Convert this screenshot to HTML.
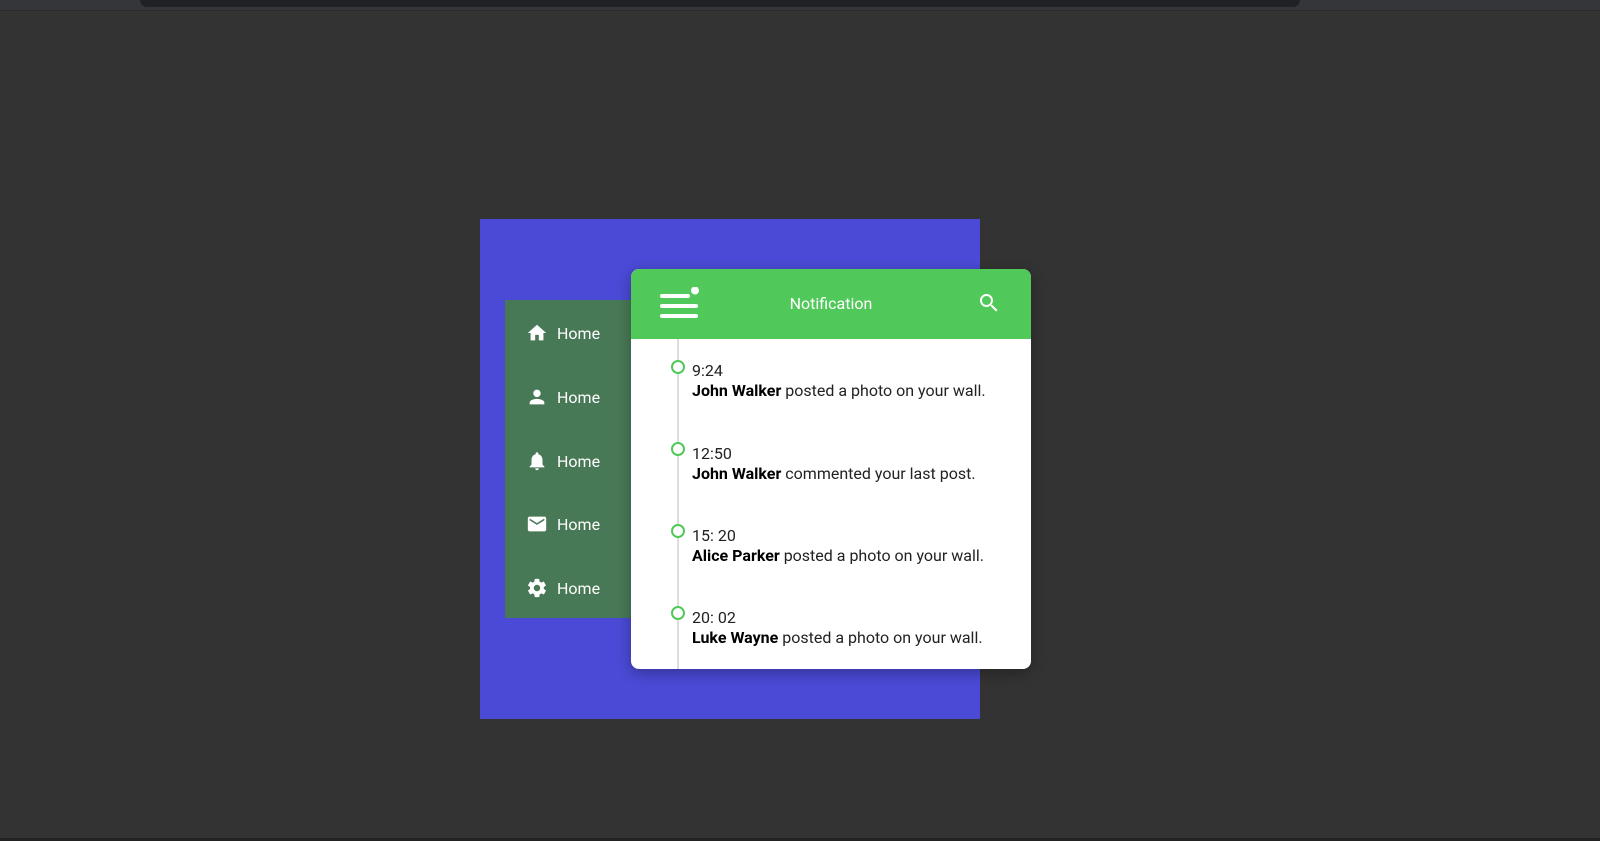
<!DOCTYPE html>
<html><head><style>
*{margin:0;padding:0;box-sizing:border-box}
body{width:1600px;height:841px;background:#333333;position:relative;overflow:hidden;font-family:Roboto,"Liberation Sans",sans-serif}
.top{position:absolute;left:0;top:0;width:1600px;height:11px;background:#35363a;border-bottom:1px solid #2a2a2a}
.url{position:absolute;left:140px;top:0;width:1160px;height:7px;background:#202124;border-radius:0 0 8px 8px}
.bot{position:absolute;left:0;top:838px;width:1600px;height:3px;background:#222}
.blue{position:absolute;left:480px;top:219px;width:500px;height:500px;background:#4a4ad6}
.side{position:absolute;left:505px;top:300px;width:150px;height:318px;background:#487956}
.it{position:absolute;left:21px;height:24px;color:#fff;font-size:16px;display:flex;align-items:center}
.it svg{width:22px;height:22px;fill:#fff;margin-right:9px}
.card{position:absolute;left:631px;top:269px;width:400px;height:400px;background:#fff;border-radius:8px;overflow:hidden;box-shadow:0 4px 14px rgba(0,0,0,.3)}
.hd{height:70px;background:#51c95a;position:relative;color:#fff}
.hd .t{position:absolute;left:0;right:0;text-align:center;top:25px;font-size:16px}
.line{position:absolute;left:46px;top:70px;width:2px;height:330px;background:#ddd}
.n{position:absolute;left:61px;font-size:16px;color:#222;line-height:20px}
.n b{color:#000}
.c{position:absolute;left:40px;width:14px;height:14px;border:2px solid #51c95a;border-radius:50%;background:#fff}
</style></head><body>
<div class="top"><div class="url"></div></div>
<div class="bot"></div>
<div class="blue"></div>
<div class="side">
<div class="it" style="top:21px"><svg viewBox="0 0 24 24"><path d="M10 20v-6h4v6h5v-8h3L12 3 2 12h3v8z"/></svg>Home</div>
<div class="it" style="top:85px"><svg viewBox="0 0 24 24"><path d="M12 12c2.2 0 4-1.8 4-4s-1.8-4-4-4-4 1.8-4 4 1.8 4 4 4zm0 2c-2.7 0-8 1.3-8 4v2h16v-2c0-2.7-5.3-4-8-4z"/></svg>Home</div>
<div class="it" style="top:149px"><svg viewBox="0 0 24 24"><path d="M12 22c1.1 0 2-.9 2-2h-4c0 1.1.9 2 2 2zm6-6v-5c0-3.1-1.6-5.6-4.5-6.3V4c0-.8-.7-1.5-1.5-1.5s-1.5.7-1.5 1.5v.7C7.6 5.4 6 7.9 6 11v5l-2 2v1h16v-1z"/></svg>Home</div>
<div class="it" style="top:212px"><svg viewBox="0 0 24 24"><path d="M20 4H4c-1.1 0-2 .9-2 2v12c0 1.1.9 2 2 2h16c1.1 0 2-.9 2-2V6c0-1.1-.9-2-2-2zm0 4l-8 5-8-5V6l8 5 8-5z"/></svg>Home</div>
<div class="it" style="top:276px"><svg viewBox="0 0 24 24"><path d="M19.4 13c.04-.3.06-.6.06-1s-.02-.7-.06-1l2.1-1.6c.2-.15.24-.4.12-.6l-2-3.5c-.12-.2-.38-.3-.6-.2l-2.5 1c-.5-.4-1.1-.7-1.7-1L14.4 2.4C14.4 2.2 14.2 2 14 2h-4c-.2 0-.4.2-.5.4L9.1 5.1c-.6.3-1.2.6-1.7 1l-2.5-1c-.2-.1-.5 0-.6.2l-2 3.5c-.1.2-.1.5.1.6L4.5 11c0 .3-.1.7-.1 1s0 .7.1 1l-2.1 1.6c-.2.2-.2.4-.1.6l2 3.5c.1.2.4.3.6.2l2.5-1c.5.4 1.1.7 1.7 1l.4 2.7c0 .2.2.4.5.4h4c.2 0 .4-.2.5-.4l.4-2.7c.6-.3 1.2-.6 1.7-1l2.5 1c.2.1.5 0 .6-.2l2-3.5c.1-.2.1-.5-.1-.6zM12 15.5c-1.9 0-3.5-1.6-3.5-3.5s1.6-3.5 3.5-3.5 3.5 1.6 3.5 3.5-1.6 3.5-3.5 3.5z"/></svg>Home</div>
</div>
<div class="card">
<div class="hd">
<svg style="position:absolute;left:29px;top:18px" width="40" height="34" viewBox="0 0 40 34"><g fill="#fff"><rect x="0" y="7" width="30" height="4" rx="2"/><rect x="0" y="17" width="38" height="4" rx="2"/><rect x="0" y="27" width="38" height="4" rx="2"/><circle cx="35" cy="3.5" r="4"/></g></svg>
<div class="t">Notification</div>
<svg style="position:absolute;left:346px;top:22px" width="24" height="24" viewBox="0 0 24 24"><path fill="#fff" d="M15.5 14h-.8l-.3-.3c1-1.1 1.6-2.6 1.6-4.2C16 5.9 13.1 3 9.5 3S3 5.9 3 9.5 5.9 16 9.5 16c1.6 0 3.1-.6 4.2-1.6l.3.3v.8l5 5 1.5-1.5zm-6 0C7 14 5 12 5 9.5S7 5 9.5 5 14 7 14 9.5 12 14 9.5 14z"/></svg>
</div>
<div class="line"></div>
<div class="c" style="top:91px"></div>
<div class="n" style="top:92px">9:24<br><b>John Walker</b> posted a photo on your wall.</div>
<div class="c" style="top:173px"></div>
<div class="n" style="top:175px">12:50<br><b>John Walker</b> commented your last post.</div>
<div class="c" style="top:255px"></div>
<div class="n" style="top:257px">15: 20<br><b>Alice Parker</b> posted a photo on your wall.</div>
<div class="c" style="top:337px"></div>
<div class="n" style="top:339px">20: 02<br><b>Luke Wayne</b> posted a photo on your wall.</div>
</div>
</body></html>
